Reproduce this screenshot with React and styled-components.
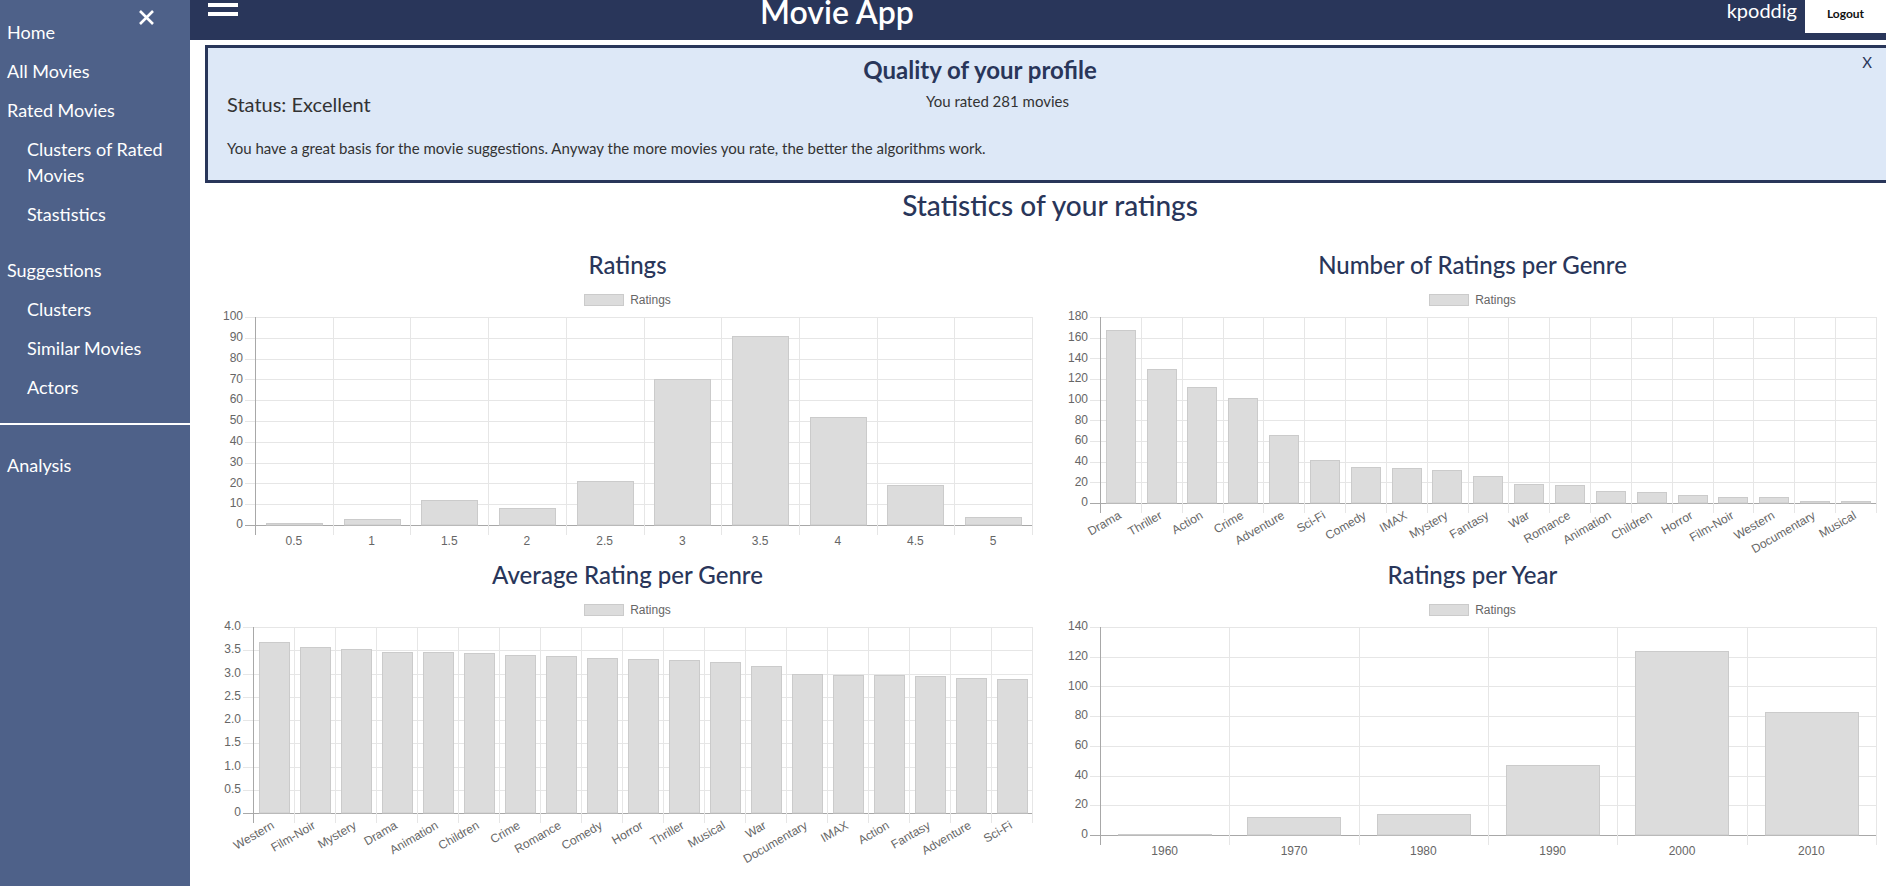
import React from "react";
import styled, { createGlobalStyle } from "styled-components";

const GlobalStyle = createGlobalStyle`
  html, body {
    margin: 0;
    padding: 0;
    overflow: hidden;
  }
  body {
    font-family: Lato, "Liberation Sans", sans-serif;
    color: #333;
    background: #fff;
  }
`;

const Page = styled.div`
  display: flex;
  width: 1886px;
  height: 886px;
  overflow: hidden;
`;

const Sidebar = styled.nav`
  position: relative;
  flex: 0 0 190px;
  box-sizing: border-box;
  padding-top: 13px;
  background: #4e6189;
`;

const CloseNav = styled.button`
  position: absolute;
  top: 9px;
  left: 138px;
  width: 17px;
  height: 17px;
  padding: 0;
  border: 0;
  background: none;
  cursor: pointer;
`;

const NavItem = styled.a`
  display: block;
  padding: 6px 8px 7px ${(p) => (p.$sub ? "27px" : "7px")};
  margin-top: ${(p) => p.$gap || 0}px;
  font-size: 18px;
  line-height: 26px;
  color: #fff;
  text-decoration: none;
  cursor: pointer;
`;

const NavDivider = styled.hr`
  height: 2px;
  margin: 16px 0 21px;
  border: 0;
  background: #fff;
`;

const Main = styled.div`
  flex: 1;
  min-width: 0;
  overflow: hidden;
`;

const Header = styled.header`
  display: flex;
  align-items: flex-start;
  height: 40px;
  overflow: hidden;
  background: #29365a;
  color: #fff;
`;

const Burger = styled.div`
  display: flex;
  flex-direction: column;
  gap: 5px;
  margin: -6px 0 0 18px;
`;

const BurgerBar = styled.span`
  width: 30px;
  height: 4px;
  background: #fff;
`;

const AppTitle = styled.h1`
  margin: -4px 0 0 522px;
  font-size: 32px;
  font-weight: 600;
  line-height: 32px;
`;

const UserName = styled.span`
  margin: 0 8px 0 auto;
  font-size: 20px;
  line-height: 20px;
`;

const LogoutButton = styled.button`
  width: 81px;
  height: 33px;
  padding: 0 0 7px;
  border: 0;
  background: #fff;
  font-family: Lato, sans-serif;
  font-size: 12px;
  font-weight: 700;
  color: #111;
  cursor: pointer;
`;

const Content = styled.div`
  width: 1690px;
  padding-left: 15px;
`;

const ProfileCard = styled.section`
  position: relative;
  box-sizing: border-box;
  margin-top: 5px;
  padding: 8px 19px 22px;
  border: 3px solid #29365a;
  background: #dde8f7;
`;

const CardTitle = styled.h4`
  margin: 0;
  padding-right: 140px;
  font-size: 24px;
  font-weight: 700;
  line-height: 28px;
  text-align: center;
  color: #29365a;
`;

const StatusRow = styled.div`
  display: flex;
  align-items: flex-start;
  height: 24px;
  margin-top: 10px;
`;

const Status = styled.div`
  flex: 0 0 699px;
  font-size: 20px;
  line-height: 21px;
`;

const RatedCount = styled.div`
  margin-top: -3px;
  font-size: 15px;
  line-height: 20px;
`;

const CardText = styled.p`
  margin: 20px 0 0;
  font-size: 15px;
  line-height: 20px;
`;

const DismissButton = styled.button`
  position: absolute;
  top: 6px;
  right: 20px;
  padding: 0;
  border: 0;
  background: none;
  font-family: Lato, sans-serif;
  font-size: 15px;
  line-height: 16px;
  color: #29365a;
  cursor: pointer;
`;

const StatsHeading = styled.h2`
  margin: 0;
  font-size: 28px;
  font-weight: 500;
  line-height: 44px;
  text-align: center;
  color: #29365a;
`;

const ChartsGrid = styled.div`
  display: grid;
  grid-template-columns: 845px 845px;
  margin-top: 20px;
`;

const ChartTitle = styled.h3`
  margin: 0;
  font-size: 24px;
  font-weight: 500;
  line-height: 36px;
  text-align: center;
  color: #29365a;
`;

const Legend = styled.div`
  display: flex;
  justify-content: center;
  align-items: center;
  gap: 6px;
  height: 12px;
  padding-top: 11px;
`;

const LegendSwatch = styled.span`
  box-sizing: border-box;
  width: 40px;
  height: 12px;
  border: 1px solid #cbcbcb;
  background: #dcdcdc;
`;

const LegendLabel = styled.span`
  font-family: "Liberation Sans", Arial, sans-serif;
  font-size: 12px;
  line-height: 12px;
  color: #666;
`;

const Plot = styled.svg`
  display: block;
  overflow: visible;

  text {
    font-family: "Liberation Sans", Arial, sans-serif;
    font-size: 12px;
    fill: #666;
  }
`;

const crisp = (v) => Math.round(v) + 0.5;

function BarChart({ labels, values, max, step, rotate, left = 50, right = 826, decimals = 0 }) {
  const top = 11;
  const bottom = rotate ? 197 : 219;
  const cw = (right - left) / labels.length;
  const bw = cw * 0.72;
  const y = (v) => bottom - (v / max) * (bottom - top);
  const ticks = [];
  for (let i = 0; i * step <= max + 1e-9; i++) ticks.push(i * step);
  const fmt = (v) => (v === 0 ? "0" : v.toFixed(decimals));

  return (
    <Plot width={845} height={251}>
      {ticks.map((v) => (
        <line key={"h" + v} x1={left - 10} x2={right} y1={crisp(y(v))} y2={crisp(y(v))}
          stroke={v === 0 ? "#a8a8a8" : "#e6e6e6"} />
      ))}
      {labels.map((_, i) => (
        <line key={"v" + i} x1={crisp(left + cw * (i + 1))} x2={crisp(left + cw * (i + 1))}
          y1={top} y2={bottom + 10} stroke="#e6e6e6" />
      ))}
      <line x1={crisp(left)} x2={crisp(left)} y1={top} y2={bottom + 10} stroke="#a8a8a8" />
      {values.map((v, i) => {
        const x0 = Math.round(left + cw * i + (cw - bw) / 2) + 0.5;
        const yt = Math.round(y(v)) + 0.5;
        return (
          <rect key={"b" + i} x={x0} y={yt} width={Math.round(bw)} height={Math.max(bottom - yt, 0.5)}
            fill="#dcdcdc" stroke="#cbcbcb" />
        );
      })}
      {ticks.map((v) => (
        <text key={"t" + v} x={left - 12} y={y(v)} textAnchor="end" dominantBaseline="middle">
          {fmt(v)}
        </text>
      ))}
      {labels.map((l, i) => {
        const cx = left + cw * (i + 0.5);
        return rotate ? (
          <text key={"l" + i} transform={`translate(${cx},${bottom + 12}) rotate(-30)`}
            textAnchor="end" dominantBaseline="middle">{l}</text>
        ) : (
          <text key={"l" + i} x={cx} y={bottom + 17} textAnchor="middle" dominantBaseline="middle">{l}</text>
        );
      })}
    </Plot>
  );
}

function ChartBlock({ title, ...chart }) {
  return (
    <div>
      <ChartTitle>{title}</ChartTitle>
      <Legend>
        <LegendSwatch />
        <LegendLabel>Ratings</LegendLabel>
      </Legend>
      <BarChart {...chart} />
    </div>
  );
}

const ratings = {
  labels: ["0.5", "1", "1.5", "2", "2.5", "3", "3.5", "4", "4.5", "5"],
  values: [1, 3, 12, 8, 21, 70, 91, 52, 19, 4],
};

const genreCounts = {
  labels: ["Drama", "Thriller", "Action", "Crime", "Adventure", "Sci-Fi", "Comedy", "IMAX", "Mystery",
    "Fantasy", "War", "Romance", "Animation", "Children", "Horror", "Film-Noir", "Western",
    "Documentary", "Musical"],
  values: [167, 130, 112, 102, 66, 42, 35, 34, 32, 26, 18, 17, 12, 11, 8, 6, 6, 2, 2],
};

const genreAverages = {
  labels: ["Western", "Film-Noir", "Mystery", "Drama", "Animation", "Children", "Crime", "Romance",
    "Comedy", "Horror", "Thriller", "Musical", "War", "Documentary", "IMAX", "Action", "Fantasy",
    "Adventure", "Sci-Fi"],
  values: [3.67, 3.58, 3.53, 3.47, 3.46, 3.45, 3.4, 3.38, 3.33, 3.31, 3.29, 3.25, 3.16, 3.0, 2.97,
    2.96, 2.94, 2.91, 2.88],
};

const years = {
  labels: ["1960", "1970", "1980", "1990", "2000", "2010"],
  values: [1, 12, 14, 47, 124, 83],
};

export default function App() {
  return (
    <Page>
      <GlobalStyle />
      <Sidebar>
        <CloseNav aria-label="Close menu">
          <svg width="17" height="17" viewBox="0 0 17 17">
            <path d="M2 2 L15 15 M15 2 L2 15" stroke="#fff" strokeWidth="2.6" />
          </svg>
        </CloseNav>
        <NavItem>Home</NavItem>
        <NavItem>All Movies</NavItem>
        <NavItem>Rated Movies</NavItem>
        <NavItem $sub>Clusters of Rated Movies</NavItem>
        <NavItem $sub>Stastistics</NavItem>
        <NavItem $gap={17}>Suggestions</NavItem>
        <NavItem $sub>Clusters</NavItem>
        <NavItem $sub>Similar Movies</NavItem>
        <NavItem $sub>Actors</NavItem>
        <NavDivider />
        <NavItem>Analysis</NavItem>
      </Sidebar>

      <Main>
        <Header>
          <Burger>
            <BurgerBar />
            <BurgerBar />
            <BurgerBar />
          </Burger>
          <AppTitle>Movie App</AppTitle>
          <UserName>kpoddig</UserName>
          <LogoutButton>Logout</LogoutButton>
        </Header>

        <Content>
          <ProfileCard>
            <DismissButton>X</DismissButton>
            <CardTitle>Quality of your profile</CardTitle>
            <StatusRow>
              <Status>Status: Excellent</Status>
              <RatedCount>You rated 281 movies</RatedCount>
            </StatusRow>
            <CardText>
              You have a great basis for the movie suggestions. Anyway the more movies you rate, the better the algorithms work.
            </CardText>
          </ProfileCard>

          <StatsHeading>Statistics of your ratings</StatsHeading>

          <ChartsGrid>
            <ChartBlock title="Ratings" {...ratings} max={100} step={10} right={827} />
            <ChartBlock title="Number of Ratings per Genre" {...genreCounts} max={180} step={20} rotate />
            <ChartBlock title="Average Rating per Genre" {...genreAverages} max={4} step={0.5} decimals={1}
              rotate left={48} right={827} />
            <ChartBlock title="Ratings per Year" {...years} max={140} step={20} />
          </ChartsGrid>
        </Content>
      </Main>
    </Page>
  );
}
